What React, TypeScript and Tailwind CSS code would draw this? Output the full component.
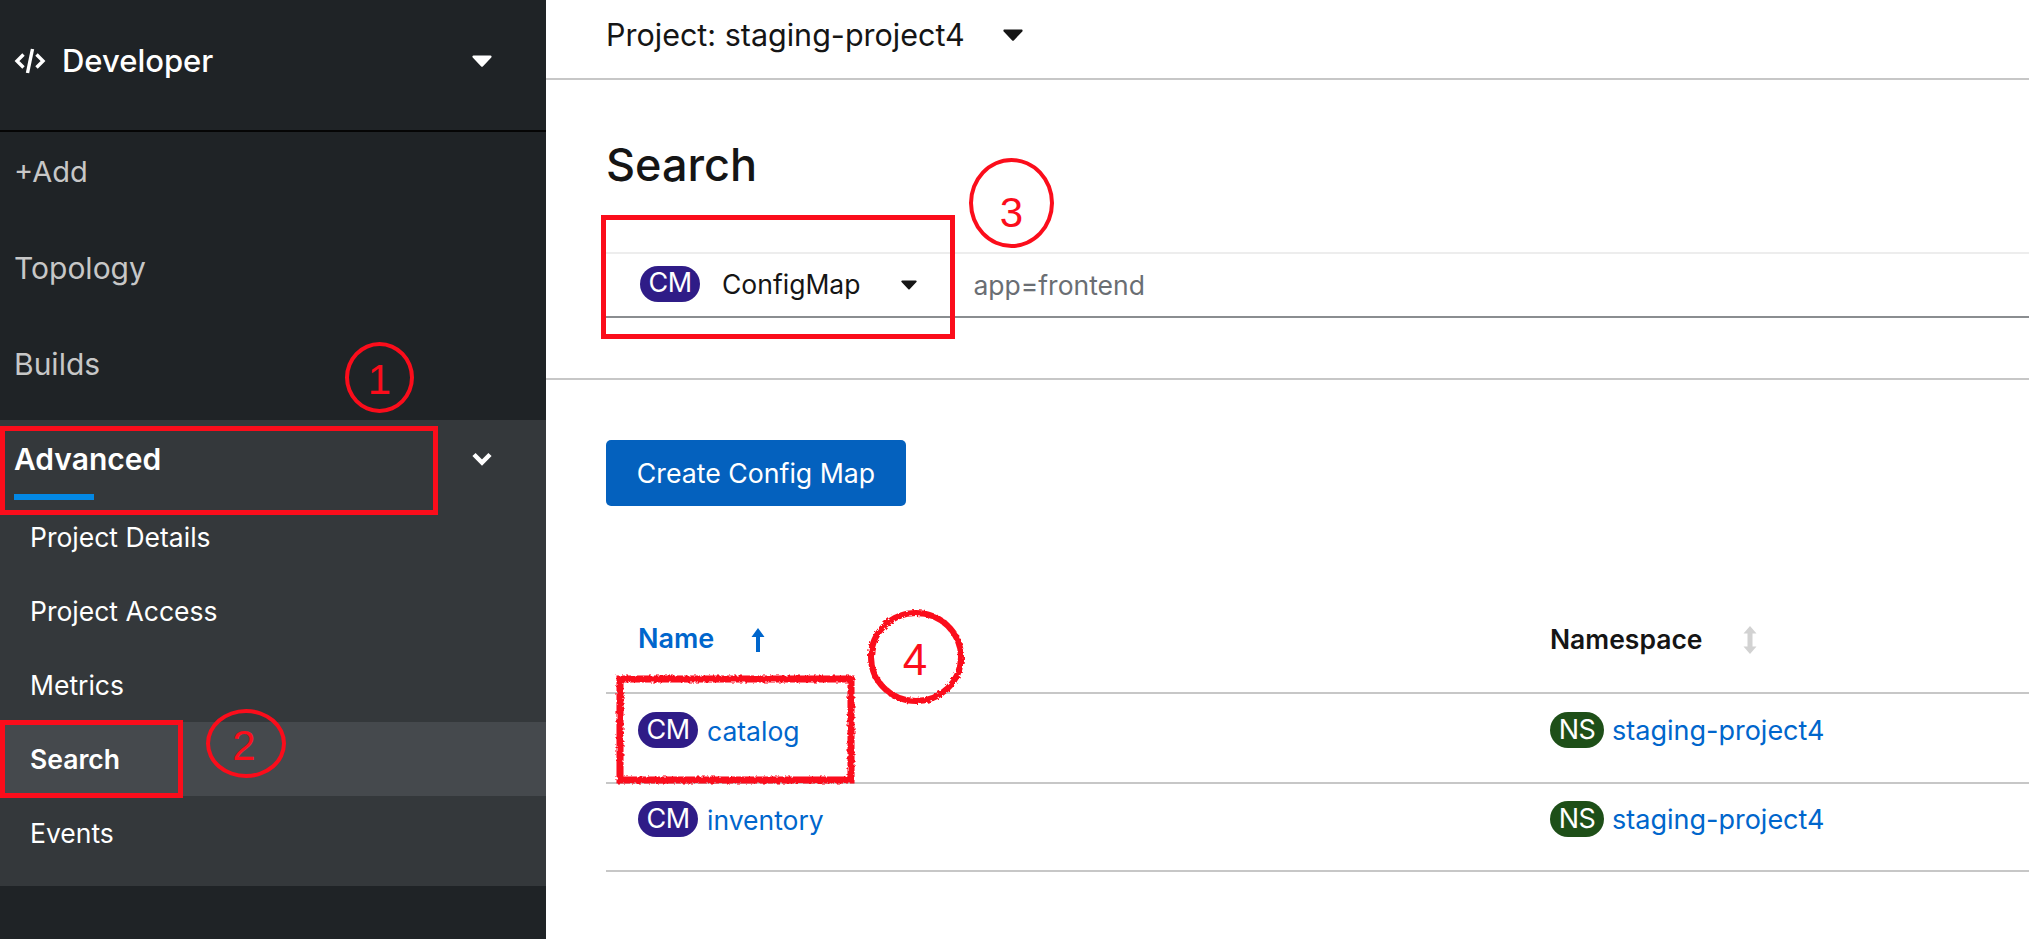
const FONT = "font-['Inter','Liberation_Sans',sans-serif]";

function Caret({ className }: { className: string }) {
  return (
    <svg viewBox="0 0 20 12" className={className} fill="currentColor">
      <path d="M1.5 0.5h17c1 0 1.5 1.2.8 1.9l-8.5 9c-.5.5-1.1.5-1.6 0l-8.5-9C0 1.7.5.5 1.5.5z" />
    </svg>
  );
}

function CodeIcon() {
  return (
    <svg viewBox="0 0 32 28" className="w-8 h-7 text-white" fill="none" stroke="currentColor" strokeWidth="3.4">
      <path d="M9.5 7.5 3 14l6.5 6.5" />
      <path d="M22.5 7.5 29 14l-6.5 6.5" />
      <path d="M18.5 2 13.5 26" />
    </svg>
  );
}

function Badge({ label, color, width }: { label: string; color: string; width: string }) {
  return (
    <span className={`${color} ${width} h-9 rounded-[18px] flex items-center justify-center text-[27px] text-white shrink-0 tracking-[-0.5px]`}>
      {label}
    </span>
  );
}

function NavLink({ label, size }: { label: string; size: string }) {
  return (
    <div className={`h-24 pb-4 pl-3.5 flex items-center ${size} text-[#c7c7c7]`}>{label}</div>
  );
}

function SubLink({ label, active }: { label: string; active?: boolean }) {
  return (
    <div className={`h-[74px] pl-[30px] pt-0.5 flex items-center text-[26.5px] text-white ${active ? "bg-[#45494d] font-semibold" : ""}`}>
      {label}
    </div>
  );
}

function Row({ name, height }: { name: string; height: string }) {
  return (
    <div className={`${height} pb-4 border-b-2 border-[#c7c7c7] flex items-center`}>
      <div className="w-[912px] pl-8 flex items-center gap-[9px]">
        <Badge label="CM" color="bg-[#2f1c87]" width="w-[60px]" />
        <span className="mt-[3px] text-[26.5px] text-[#0066cc]">{name}</span>
      </div>
      <div className="pl-8 flex items-center gap-2">
        <Badge label="NS" color="bg-[#1e4f18]" width="w-[54px]" />
        <span className="mt-[3px] text-[27px] text-[#0066cc]">staging-project4</span>
      </div>
    </div>
  );
}

function Marker({ n, className }: { n: string; className: string }) {
  return (
    <div className={`absolute rounded-[50%] border-4 border-[#fb0d1b] flex items-center justify-center text-[#fb0d1b] font-['Liberation_Sans',sans-serif] text-[42px] ${className}`}>
      {n}
    </div>
  );
}

export default function App() {
  return (
    <div className={`relative w-[2029px] h-[939px] overflow-hidden bg-white flex ${FONT}`}>
      {/* sidebar */}
      <aside className="w-[546px] h-full bg-[#1f2326] flex flex-col shrink-0">
        <div className="h-[132px] border-b-2 border-[#050505] flex items-center pl-3.5 pr-[54px] pb-2">
          <CodeIcon />
          <span className="ml-4 text-[31px] font-medium text-white">Developer</span>
          <Caret className="ml-auto w-5 h-3 text-white" />
        </div>
        <NavLink label="+Add" size="text-[29px]" />
        <NavLink label="Topology" size="text-[30px]" />
        <NavLink label="Builds" size="text-[30px]" />
        <div className="bg-[#34383b]">
          <div className="h-20 flex flex-col">
            <div className="flex-1 pt-1 pl-3.5 pr-[54px] flex items-center justify-between">
              <span className="text-[30px] font-semibold text-white">Advanced</span>
              <svg viewBox="0 0 20 14" className="w-5 h-3.5 text-white" fill="none" stroke="currentColor" strokeWidth="4.5">
                <path d="M2 2.5 10 10.5 18 2.5" />
              </svg>
            </div>
            <div className="ml-3.5 w-20 h-1.5 bg-[#0388e5]" />
          </div>
          <SubLink label="Project Details" />
          <SubLink label="Project Access" />
          <SubLink label="Metrics" />
          <SubLink label="Search" active />
          <SubLink label="Events" />
          <div className="h-4" />
        </div>
      </aside>

      {/* main */}
      <main className="flex-1 min-w-0 text-[#151515]">
        <div className="h-20 border-b-2 border-[#c7c7c7] pl-[60px] pb-2 flex items-center">
          <span className="text-[30.5px]">Project: staging-project4</span>
          <Caret className="ml-[38px] w-5 h-3 text-[#151515]" />
        </div>

        <section className="h-[300px] border-b-2 border-[#c7c7c7] pl-[60px] pt-[59px]">
          <h1 className="h-[113px] text-[45px] font-medium leading-[52px]">Search</h1>
          <div className="h-[66px] border-t-2 border-t-[#ededed] border-b-2 border-b-[#8a8d90] flex items-center">
            <div className="ml-[34px] mt-[-3px]">
              <Badge label="CM" color="bg-[#2f1c87]" width="w-[60px]" />
            </div>
            <span className="ml-[22px] text-[26.5px]">ConfigMap</span>
            <Caret className="ml-[41px] w-4 h-2.5 text-[#151515]" />
            <span className="ml-[56px] mt-0.5 text-[26.5px] text-[#6a6e73]">app=frontend</span>
          </div>
        </section>

        <div className="pl-[60px] pt-[60px]">
          <button className="w-[300px] h-[66px] rounded-[5px] bg-[#0461be] text-white text-[26.7px]">Create Config Map</button>

          <div className="mt-[78px] h-[110px] border-b-2 border-[#c7c7c7] flex items-center">
            <div className="w-[912px] pl-8 mt-[3px] flex items-center text-[#0066cc] font-semibold text-[27px]">
              Name
              <svg viewBox="0 0 14 24" className="ml-[37px] w-3.5 h-6" fill="currentColor">
                <path d="M7 0 13.5 9H9v15H5V9H.5z" />
              </svg>
            </div>
            <div className="pl-8 mt-[3px] flex items-center font-semibold text-[26.5px]">
              Namespace
              <svg viewBox="0 0 14 28" className="ml-10 w-3.5 h-7 text-[#d2d2d2]" fill="currentColor">
                <path d="M7 0 13.5 7.5H9.5v13h4L7 28 .5 20.5h4v-13h-4z" />
              </svg>
            </div>
          </div>
          <Row name="catalog" height="h-[90px]" />
          <Row name="inventory" height="h-[88px]" />
        </div>
      </main>

      {/* annotations drawn over the screenshot */}
      <div className="absolute left-0 top-[426px] w-[438px] h-[89px] border-[5px] border-[#fb0d1b]" />
      <Marker n="1" className="left-[345px] top-[342px] w-[69px] h-[71px] pt-1" />
      <div className="absolute left-0 top-[720px] w-[183px] h-[78px] border-[5px] border-[#fb0d1b]" />
      <Marker n="2" className="left-[206px] top-[709px] w-[80px] h-[69px] pt-1 pr-1" />
      <div className="absolute left-[601px] top-[215px] w-[354px] h-[124px] border-[5px] border-[#fb0d1b]" />
      <Marker n="3" className="left-[969px] top-[158px] w-[85px] h-[90px] pt-[18px]" />

      <svg className="absolute left-[600px] top-[600px] w-[380px] h-[200px]" viewBox="0 0 380 200" fill="none">
        <defs>
          <filter id="rough" x="-5%" y="-5%" width="110%" height="110%">
            <feTurbulence type="fractalNoise" baseFrequency="0.35" numOctaves="2" seed="4" />
            <feDisplacementMap in="SourceGraphic" scale="4" />
          </filter>
        </defs>
        <g stroke="#fb0d1b" filter="url(#rough)">
          <path d="M20 79H251V180H20Z" strokeWidth="7" />
          <ellipse cx="316" cy="57" rx="45" ry="44" strokeWidth="6" />
        </g>
        <text x="315" y="75" textAnchor="middle" fill="#fb0d1b" fontSize="44" fontFamily="Liberation Sans">4</text>
      </svg>
    </div>
  );
}
